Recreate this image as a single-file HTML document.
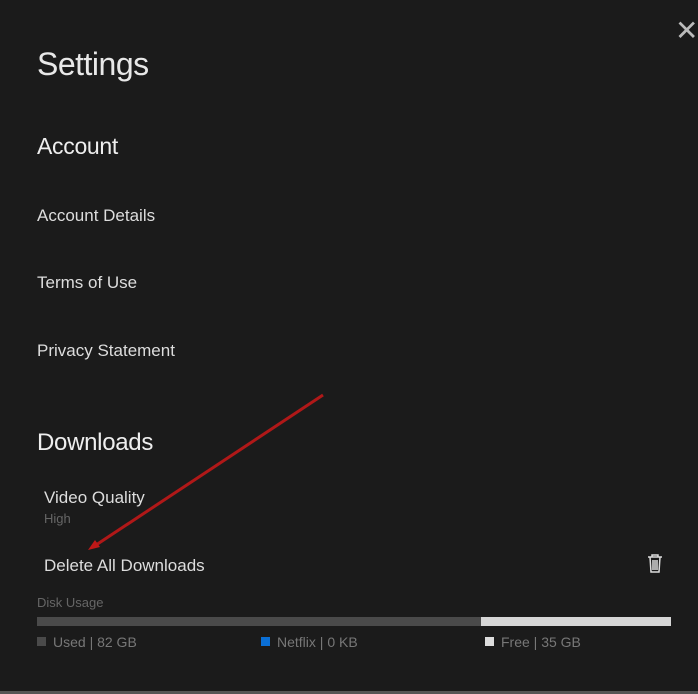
<!DOCTYPE html>
<html><head><meta charset="utf-8"><style>
body{margin:0;width:698px;height:694px;background:#1b1b1b;font-family:"Liberation Sans",sans-serif;color:#eee;position:relative;overflow:hidden}
.t{position:absolute;white-space:nowrap}
</style></head><body>
<div class="t" style="left:37px;top:46px;font-size:32px;color:#e8e8e8;letter-spacing:-0.5px">Settings</div>
<div class="t" style="left:675px;top:14px;font-size:28px;color:#bbb">✕</div>
<div class="t" style="left:37px;top:133px;font-size:23px;letter-spacing:-0.3px">Account</div>
<div class="t" style="left:37px;top:206px;font-size:17px;color:#ddd">Account Details</div>
<div class="t" style="left:37px;top:273px;font-size:17px;color:#ddd">Terms of Use</div>
<div class="t" style="left:37px;top:341px;font-size:17px;color:#ddd">Privacy Statement</div>
<div class="t" style="left:37px;top:429px;font-size:24px;letter-spacing:-0.3px">Downloads</div>
<div class="t" style="left:44px;top:488px;font-size:17px;color:#ddd">Video Quality</div>
<div class="t" style="left:44px;top:511px;font-size:13px;color:#666">High</div>
<div class="t" style="left:44px;top:556px;font-size:17px;color:#ddd">Delete All Downloads</div>
<svg class="t" style="left:646px;top:554px" width="18" height="20" viewBox="0 0 18 20"><path d="M2 3h14M6 3V1h6v2M4 3l1 15h8l1-15M7 6v10M9 6v10M11 6v10" stroke="#ddd" stroke-width="1.5" fill="none"/></svg>
<div class="t" style="left:37px;top:595px;font-size:13px;color:#666">Disk Usage</div>
<div class="t" style="left:37px;top:617px;width:444px;height:9px;background:#4a4a4a"></div>
<div class="t" style="left:481px;top:617px;width:190px;height:9px;background:#d6d6d6"></div>
<div class="t" style="left:37px;top:637px;width:9px;height:9px;background:#4a4a4a"></div>
<div class="t" style="left:53px;top:634px;font-size:14px;color:#777">Used | 82 GB</div>
<div class="t" style="left:261px;top:637px;width:9px;height:9px;background:#0a6fd6"></div>
<div class="t" style="left:277px;top:634px;font-size:14px;color:#777">Netflix | 0 KB</div>
<div class="t" style="left:485px;top:637px;width:9px;height:9px;background:#ddd"></div>
<div class="t" style="left:501px;top:634px;font-size:14px;color:#777">Free | 35 GB</div>
<div class="t" style="left:0;top:691px;width:698px;height:3px;background:#555"></div>
<svg class="t" style="left:0;top:0" width="698" height="694"><line x1="323" y1="395" x2="96" y2="545" stroke="#b01818" stroke-width="3"/><path d="M88 550l12-3-5-7z" fill="#c01818"/></svg>
</body></html>
